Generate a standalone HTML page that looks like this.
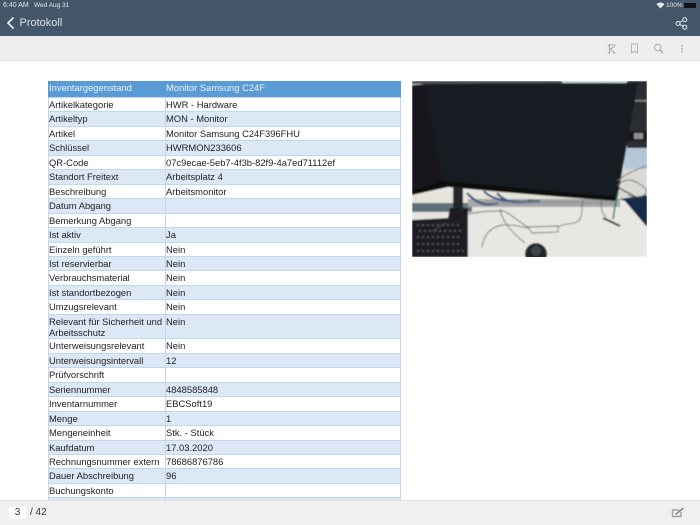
<!DOCTYPE html>
<html lang="de"><head><meta charset="utf-8"><title>Protokoll</title>
<style>
*{box-sizing:border-box}
html,body{margin:0;padding:0}
body{width:700px;height:525px;overflow:hidden;position:relative;background:#fff;font-family:"Liberation Sans",sans-serif;color:#222}
.top{position:absolute;left:0;top:0;width:700px;height:36px;background:#44566a;color:#e4e8ec}
.status{position:absolute;top:2px;font-size:6.5px;line-height:7px;color:#e4e8ec;white-space:nowrap}
.title{position:absolute;left:19.5px;top:16px;font-size:11px;line-height:15px;color:#dde2e7}
.bar{position:absolute;left:0;top:36px;width:700px;height:25px;background:#eee;border-bottom:1px solid #e0e0e0}
.t{position:absolute;left:48px;top:81px;width:353px;font-size:9.4px;color:#222}
.r{position:relative;height:14.46px;line-height:13.4px;background:#fff;border:1px solid #bfd8f0;border-top:0}
.r.b{background:#dce8f5}
.r.tall{height:24.6px;line-height:11.5px}
.r.tall .a{padding-top:1px;width:116px;white-space:normal}
.r.tall .c{padding-top:1px}
.r.h{height:17px;background:#5b9bd5;color:#eaf2fa;border-color:#5b9bd5;border-bottom:1px solid #bfd8f0;line-height:13px}
.a,.c{position:absolute;top:0;white-space:nowrap}
.a{left:0}
.c{left:116px;height:100%;border-left:1px solid #bfd8f0;padding-left:0;width:236px}
.r.h .c{border-left-color:#5b9bd5}
.foot{position:absolute;left:0;top:500px;width:700px;height:25px;background:#f0f0f0;border-top:1px solid #e2e2e2}
.pg{position:absolute;left:9px;top:6px;width:17px;height:12px;background:#fff;font-size:10px;line-height:12px;text-align:center;color:#333}
.tot{position:absolute;left:30px;top:6px;font-size:10px;line-height:12px;color:#333}
svg{position:absolute}
</style></head><body>
<div class="t">
<div class="r h"><span class="a">Inventargegenstand</span><span class="c">Monitor Samsung C24F</span></div>
<div class="r"><span class="a">Artikelkategorie</span><span class="c">HWR - Hardware</span></div>
<div class="r b"><span class="a">Artikeltyp</span><span class="c">MON - Monitor</span></div>
<div class="r"><span class="a">Artikel</span><span class="c">Monitor Samsung C24F396FHU</span></div>
<div class="r b"><span class="a">Schlüssel</span><span class="c">HWRMON233606</span></div>
<div class="r"><span class="a">QR-Code</span><span class="c">07c9ecae-5eb7-4f3b-82f9-4a7ed71112ef</span></div>
<div class="r b"><span class="a">Standort Freitext</span><span class="c">Arbeitsplatz 4</span></div>
<div class="r"><span class="a">Beschreibung</span><span class="c">Arbeitsmonitor</span></div>
<div class="r b"><span class="a">Datum Abgang</span><span class="c"></span></div>
<div class="r"><span class="a">Bemerkung Abgang</span><span class="c"></span></div>
<div class="r b"><span class="a">Ist aktiv</span><span class="c">Ja</span></div>
<div class="r"><span class="a">Einzeln geführt</span><span class="c">Nein</span></div>
<div class="r b"><span class="a">Ist reservierbar</span><span class="c">Nein</span></div>
<div class="r"><span class="a">Verbrauchsmaterial</span><span class="c">Nein</span></div>
<div class="r b"><span class="a">Ist standortbezogen</span><span class="c">Nein</span></div>
<div class="r"><span class="a">Umzugsrelevant</span><span class="c">Nein</span></div>
<div class="r b tall"><span class="a">Relevant für Sicherheit und Arbeitsschutz</span><span class="c">Nein</span></div>
<div class="r"><span class="a">Unterweisungsrelevant</span><span class="c">Nein</span></div>
<div class="r b"><span class="a">Unterweisungsintervall</span><span class="c">12</span></div>
<div class="r"><span class="a">Prüfvorschrift</span><span class="c"></span></div>
<div class="r b"><span class="a">Seriennummer</span><span class="c">4848585848</span></div>
<div class="r"><span class="a">Inventarnummer</span><span class="c">EBCSoft19</span></div>
<div class="r b"><span class="a">Menge</span><span class="c">1</span></div>
<div class="r"><span class="a">Mengeneinheit</span><span class="c">Stk. - Stück</span></div>
<div class="r b"><span class="a">Kaufdatum</span><span class="c">17.03.2020</span></div>
<div class="r"><span class="a">Rechnungsnummer extern</span><span class="c">78686876786</span></div>
<div class="r b"><span class="a">Dauer Abschreibung</span><span class="c">96</span></div>
<div class="r"><span class="a">Buchungskonto</span><span class="c"></span></div>
<div class="r b"><span class="a">&nbsp;</span><span class="c"></span></div>
</div>

<svg style="left:412px;top:81px" width="235" height="176" viewBox="0 0 235 176">
<defs><filter id="bl" x="0" y="0" width="100%" height="100%"><feGaussianBlur stdDeviation=".7"/></filter><clipPath id="cp"><rect width="235" height="176"/></clipPath></defs>
<g clip-path="url(#cp)"><g filter="url(#bl)">
<rect width="235" height="176" fill="#e9e7e3"/>
<rect x="0" y="0" width="235" height="3" fill="#4a4e52"/>
<rect x="150" y="0" width="75" height="2" fill="#b9d3da"/>
<rect x="215" y="0" width="20" height="68" fill="#2b2d30"/>
<rect x="222" y="19" width="13" height="1.5" fill="#8a8580"/>
<rect x="214" y="50" width="21" height="10" fill="#17191b"/>
<rect x="222" y="52" width="9" height="6" fill="#8d8f92"/>
<rect x="212" y="67" width="23" height="21" fill="#b3c7d6"/>
<rect x="207" y="88" width="28" height="30" fill="#d9d9d6"/>
<polygon points="0,112 207,112 207,119 60,120 60,122 0,122" fill="#e6e3da"/>
<rect x="0" y="122" width="60" height="9" fill="#5f7078"/>
<rect x="0" y="131" width="60" height="7" fill="#e6e5e1"/>
<rect x="56" y="118" width="152" height="8" fill="#a5a7a6"/>
<polygon points="207,118 235,114 235,146 213,120" fill="#16294a"/>
<polygon points="0,4 14,3 32,102 0,111" fill="#14171a"/>
<polygon points="12,3 226,2 205,119 150,113 90,107 31,102" fill="#191e22"/>
<polygon points="31,100 90,105 150,111 206,116 204,120 150,116 90,111 36,106 0,114 0,110" fill="#0c0d0f"/>
<rect x="41" y="106" width="10" height="26" fill="#22252a"/>
<path d="M55 112C64 122 74 126 86 122M72 110C80 120 100 122 128 120M85 112C92 121 105 124 120 119" stroke="#2e4f83" stroke-width="2.2" fill="none"/>
<rect x="72" y="120" width="130" height="3" fill="#8f9092" opacity=".5"/>
<polygon points="0,139 36,137 38,127 56,127 56,176 0,176" fill="#1c1e21"/>
<g stroke="#5a5f65" stroke-width="1.4" stroke-dasharray="2 3" fill="none">
<path d="M5 144H50M7 150H52M5 156H50M5 163H50M5 170H52"/>
<path d="M20 150 34 142" stroke-dasharray="none" stroke-width=".6"/>
</g>
<g fill="none" stroke="#6b665f" stroke-width=".9">
<path d="M56 133C70 130 80 130 92 130 100 134 108 142 116 146"/>
<path d="M70 166C72 152 80 146 90 144 100 143 110 146 116 147"/>
<path d="M116 146 146 145 146 151 120 152 116 146"/>
<path d="M146 146C155 141 165 144 168 138 172 130 168 125 172 119"/>
<path d="M88 128C90 140 98 150 113 162"/>
<path d="M190 118C188 126 190 132 194 136"/>
<path d="M205 105C215 94 225 100 234 108 236 115 226 119 216 114"/>
<path d="M205 100C215 92 225 88 235 85"/>
</g>
<path d="M205 106 235 122" stroke="#222" stroke-width="1.2"/>
<path d="M206 112 203 125 201 138" stroke="#2f7a62" stroke-width="1.6" fill="none"/>
<path d="M191 137 208 145" stroke="#4a4630" stroke-width="2.2"/>
<ellipse cx="124" cy="173" rx="11" ry="11" fill="#23282c"/>
<ellipse cx="124" cy="170" rx="5" ry="5" fill="#3f474e"/>
</g></g>
</svg>

<div class="top">
<div class="status" style="left:3px;font-size:7px">6:40 AM</div>
<div class="status" style="left:34px">Wed Aug 31</div>
<svg style="left:656px;top:2px" width="9" height="7" viewBox="0 0 9 7"><path d="M.5 2.2C3 0 6 0 8.5 2.2L4.5 6.5Z" fill="#e8ebee"/></svg>
<div class="status" style="left:666px">100%</div>
<div style="position:absolute;left:684px;top:3px;width:12px;height:5px;background:#0f1216;border-radius:1px"></div>
<svg style="left:6px;top:16px" width="9" height="14" viewBox="0 0 9 14"><path d="M7.5 1.5 2 7l5.5 5.5" fill="none" stroke="#eef1f3" stroke-width="1.7"/></svg>
<div class="title">Protokoll</div>
<svg style="left:675px;top:17px" width="13" height="13" viewBox="0 0 13 13" fill="none" stroke="#e8ebee" stroke-width="1"><circle cx="3" cy="6.5" r="2"/><circle cx="9.8" cy="2.6" r="2"/><circle cx="9.8" cy="10.2" r="2"/><path d="M4.8 5.5 8 3.6M4.8 7.5 8 9.2"/></svg>
</div>
<div class="bar">
<svg style="left:607px;top:8px" width="9" height="10" viewBox="0 0 9 10" fill="none" stroke="#a8a8a8" stroke-width="1.1"><path d="M.5 1h8M.5 9h2.5M6 9h2.5M2.5 1v8M8 2.5 3 5l5 4"/></svg>
<svg style="left:630px;top:7px" width="9" height="11" viewBox="0 0 9 11" fill="none" stroke="#b4b4b4" stroke-width="1"><path d="M1.5 1h6v9L4.5 8l-3 2Z"/></svg>
<svg style="left:653px;top:7px" width="11" height="11" viewBox="0 0 11 11" fill="none" stroke="#a8a8a8" stroke-width="1"><circle cx="4.8" cy="4.5" r="3.3"/><path d="M7.2 7 10 10" stroke-width="1.4"/></svg>
<svg style="left:680px;top:8px" width="4" height="10" viewBox="0 0 4 10" fill="#8e8e8e"><circle cx="2" cy="1.8" r=".8"/><circle cx="2" cy="4.8" r=".8"/><circle cx="2" cy="7.8" r=".8"/></svg>
</div>
<div class="foot">
<div class="pg">3</div>
<div class="tot">/ 42</div>
<svg style="left:671px;top:6px" width="14" height="11" viewBox="0 0 14 11" fill="none"><path d="M10 5v4.5H1.5V3H8" stroke="#a0a0a0" stroke-width="1.4"/><path d="M4.5 7.5 12.5 1" stroke="#8c8c8c" stroke-width="1.7"/></svg>
</div>
</body></html>
